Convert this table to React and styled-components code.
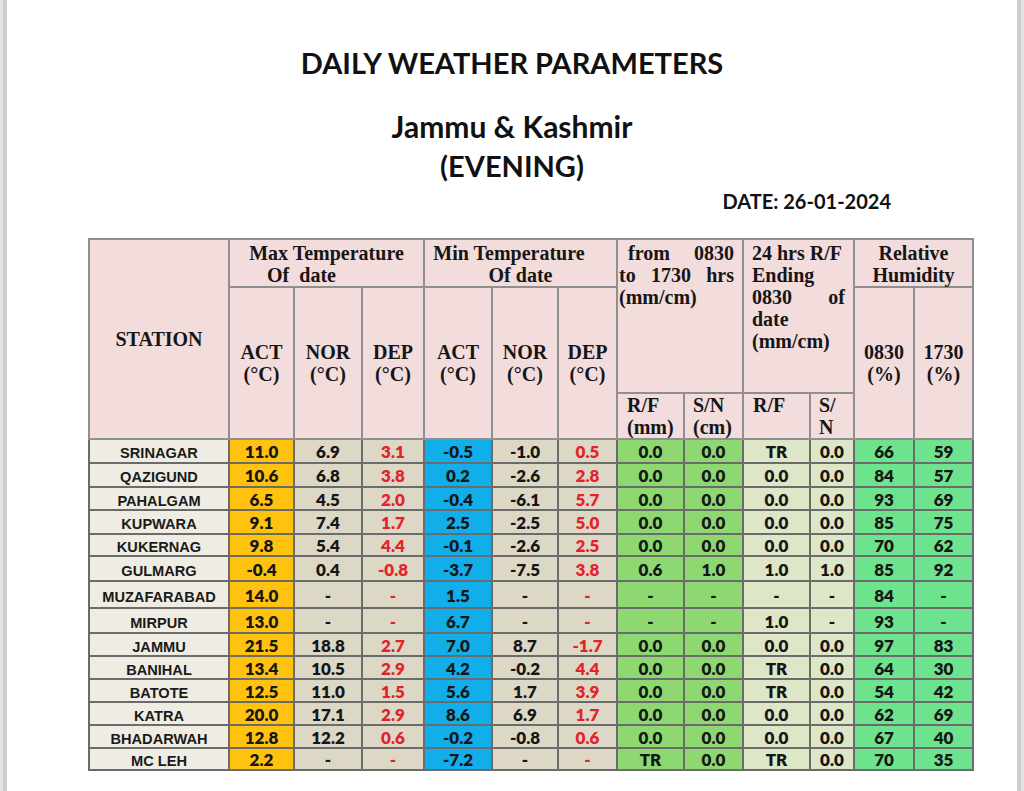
import React from "react";
import styled, { createGlobalStyle } from "styled-components";

const Global = createGlobalStyle`
  html, body { margin: 0; padding: 0; background: #d6d6d6; }
  body { width: 1024px; height: 791px; overflow: hidden; }
`;

const Frame = styled.div`
  display: flex;
  width: 1024px;
  height: 791px;
  background: linear-gradient(to right, #e3e3e3 0 3px, #cdcdcd 3px 7px, transparent 7px 1017px, #cdcdcd 1017px 1021px, #e3e3e3 1021px);
`;

const Page = styled.div`
  margin: 0 7px;
  flex: 1;
  background: #ffffff;
  display: flex;
  flex-direction: column;
  padding-top: 43px;
`;

const Title = styled.h1`
  margin: 0;
  text-align: center;
  font-family: Lato, "Open Sans", sans-serif;
  font-weight: 700;
  font-size: ${(p) => p.$size || 27}px;
  line-height: ${(p) => p.$lh || 39}px;
  color: #111;
`;

const Titles = styled.div`
  display: flex;
  flex-direction: column;
  gap: ${(p) => p.$gap}px;
`;

const DateLine = styled.div`
  align-self: flex-end;
  margin-right: 126px;
  margin-top: 4px;
  font-family: Lato, "Open Sans", sans-serif;
  font-weight: 700;
  font-size: 20px;
  line-height: 24px;
  color: #111;
`;

const TableWrap = styled.div`
  padding-left: 81px;
  margin-top: 25px;
`;

const Table = styled.table`
  border-collapse: collapse;
  table-layout: fixed;
  width: 884px;
  border: 2px solid #8c8c8c;
`;

const Th = styled.th`
  background: #f2dcdc;
  border: 2px solid #8f8f8f;
  font-family: "Liberation Serif", "Times New Roman", serif;
  font-weight: 700;
  font-size: 20px;
  line-height: 22px;
  color: #161616;
  padding: ${(p) => p.$pad || "0"};
  text-align: ${(p) => p.$align || "center"};
  vertical-align: ${(p) => p.$valign || "middle"};
`;

const Line = styled.span`
  display: block;
  white-space: nowrap;
  text-align: ${(p) => (p.$justify ? "justify" : p.$center ? "center" : "left")};
  text-align-last: ${(p) => (p.$justify ? "justify" : p.$center ? "center" : "left")};
  text-indent: ${(p) => p.$indent || 0}px;
  padding-right: ${(p) => p.$shift || 0}px;
`;

const HRow = styled.tr`
  height: ${(p) => p.$h}px;
`;

const DRow = styled.tr`
  height: ${(p) => p.$h}px;
`;

const Station = styled.td`
  background: #efede3;
  border: 2px solid #6b6b6b;
  font-family: "Liberation Sans", Arial, sans-serif;
  font-weight: 700;
  font-size: 14.6px;
  color: #1a1a1a;
  text-align: center;
  vertical-align: middle;
  padding: 4px 0 0;
  line-height: 16px;
  white-space: nowrap;
`;

const Cell = styled.td`
  background: ${(p) => p.$bg};
  border: 2px solid #6b6b6b;
  font-family: Lato, "Open Sans", sans-serif;
  font-weight: 800;
  font-size: 17px;
  color: ${(p) => p.$color || "#161616"};
  text-align: center;
  vertical-align: middle;
  padding: 2px 0 0;
  line-height: 18px;
`;

const COLS = [140, 65, 68, 62, 68, 66, 59, 67, 59, 67, 44, 60, 59];

const BG = {
  orange: "#fec20f",
  tan: "#ddd8c5",
  blue: "#11aeea",
  green: "#8ed872",
  pale: "#dde6c6",
  mint: "#6ce38c",
};

const COL_STYLE = [
  { bg: BG.orange },
  { bg: BG.tan },
  { bg: BG.tan, color: "#e3232b" },
  { bg: BG.blue },
  { bg: BG.tan },
  { bg: BG.tan, color: "#e3232b" },
  { bg: BG.green },
  { bg: BG.green },
  { bg: BG.pale },
  { bg: BG.pale },
  { bg: BG.mint },
  { bg: BG.mint },
];

const ROWS = [
  ["SRINAGAR", 24, ["11.0", "6.9", "3.1", "-0.5", "-1.0", "0.5", "0.0", "0.0", "TR", "0.0", "66", "59"]],
  ["QAZIGUND", 24, ["10.6", "6.8", "3.8", "0.2", "-2.6", "2.8", "0.0", "0.0", "0.0", "0.0", "84", "57"]],
  ["PAHALGAM", 23, ["6.5", "4.5", "2.0", "-0.4", "-6.1", "5.7", "0.0", "0.0", "0.0", "0.0", "93", "69"]],
  ["KUPWARA", 24, ["9.1", "7.4", "1.7", "2.5", "-2.5", "5.0", "0.0", "0.0", "0.0", "0.0", "85", "75"]],
  ["KUKERNAG", 22, ["9.8", "5.4", "4.4", "-0.1", "-2.6", "2.5", "0.0", "0.0", "0.0", "0.0", "70", "62"]],
  ["GULMARG", 25, ["-0.4", "0.4", "-0.8", "-3.7", "-7.5", "3.8", "0.6", "1.0", "1.0", "1.0", "85", "92"]],
  ["MUZAFARABAD", 27, ["14.0", "-", "-", "1.5", "-", "-", "-", "-", "-", "-", "84", "-"]],
  ["MIRPUR", 25, ["13.0", "-", "-", "6.7", "-", "-", "-", "-", "1.0", "-", "93", "-"]],
  ["JAMMU", 23, ["21.5", "18.8", "2.7", "7.0", "8.7", "-1.7", "0.0", "0.0", "0.0", "0.0", "97", "83"]],
  ["BANIHAL", 23, ["13.4", "10.5", "2.9", "4.2", "-0.2", "4.4", "0.0", "0.0", "TR", "0.0", "64", "30"]],
  ["BATOTE", 23, ["12.5", "11.0", "1.5", "5.6", "1.7", "3.9", "0.0", "0.0", "TR", "0.0", "54", "42"]],
  ["KATRA", 23, ["20.0", "17.1", "2.9", "8.6", "6.9", "1.7", "0.0", "0.0", "0.0", "0.0", "62", "69"]],
  ["BHADARWAH", 23, ["12.8", "12.2", "0.6", "-0.2", "-0.8", "0.6", "0.0", "0.0", "0.0", "0.0", "67", "40"]],
  ["MC LEH", 22, ["2.2", "-", "-", "-7.2", "-", "-", "TR", "0.0", "TR", "0.0", "70", "35"]],
];

function TempHeads({ prefix }) {
  return ["ACT", "NOR", "DEP"].map((t) => (
    <Th key={prefix + t} rowSpan={2}>
      {t}
      <br />
      (°C)
    </Th>
  ));
}

export default function App() {
  return (
    <>
      <Global />
      <Frame>
        <Page>
          <Titles $gap={25}>
            <Title $size={29}>DAILY WEATHER PARAMETERS</Title>
            <Titles $gap={0}>
              <Title $size={30}>Jammu &amp; Kashmir</Title>
              <Title $size={29}>(EVENING)</Title>
            </Titles>
          </Titles>
          <DateLine>DATE: 26-01-2024</DateLine>
          <TableWrap>
            <Table>
              <colgroup>
                {COLS.map((w, i) => (
                  <col key={i} style={{ width: w }} />
                ))}
              </colgroup>
              <thead>
                <HRow $h={47}>
                  <Th rowSpan={3}>STATION</Th>
                  <Th colSpan={3} $valign="top" $pad="2px 0 0">
                    <Line $center>Max Temperature</Line>
                    <Line $center $shift={50}>Of&nbsp; date</Line>
                  </Th>
                  <Th colSpan={3} $valign="top" $pad="2px 0 0">
                    <Line $center $shift={23}>Min Temperature</Line>
                    <Line $center>Of date</Line>
                  </Th>
                  <Th colSpan={2} rowSpan={2} $valign="top" $pad="2px 8px 0 1px">
                    <Line $justify $indent={9}>from 0830</Line>
                    <Line $justify>to 1730 hrs</Line>
                    <Line>(mm/cm)</Line>
                  </Th>
                  <Th colSpan={2} rowSpan={2} $valign="top" $pad="2px 8px 0 8px">
                    <Line>24 hrs R/F</Line>
                    <Line>Ending</Line>
                    <Line $justify>0830 of</Line>
                    <Line>date</Line>
                    <Line>(mm/cm)</Line>
                  </Th>
                  <Th colSpan={2} $valign="top" $pad="2px 0 0">
                    <Line $center>Relative</Line>
                    <Line $center>Humidity</Line>
                  </Th>
                </HRow>
                <HRow $h={106}>
                  <TempHeads prefix="x" />
                  <TempHeads prefix="n" />
                  <Th rowSpan={2}>
                    0830
                    <br />
                    (%)
                  </Th>
                  <Th rowSpan={2}>
                    1730
                    <br />
                    (%)
                  </Th>
                </HRow>
                <HRow $h={44}>
                  <Th $align="left" $valign="top" $pad="0 0 0 9px">
                    R/F
                    <br />
                    (mm)
                  </Th>
                  <Th $align="left" $valign="top" $pad="0 0 0 8px">
                    S/N
                    <br />
                    (cm)
                  </Th>
                  <Th $align="left" $valign="top" $pad="0 0 0 9px">
                    R/F
                  </Th>
                  <Th $align="left" $valign="top" $pad="0 0 0 8px">
                    S/
                    <br />N
                  </Th>
                </HRow>
              </thead>
              <tbody>
                {ROWS.map(([name, h, vals]) => (
                  <DRow key={name} $h={h}>
                    <Station>{name}</Station>
                    {vals.map((v, i) => (
                      <Cell key={i} $bg={COL_STYLE[i].bg} $color={COL_STYLE[i].color}>
                        {v}
                      </Cell>
                    ))}
                  </DRow>
                ))}
              </tbody>
            </Table>
          </TableWrap>
        </Page>
      </Frame>
    </>
  );
}
